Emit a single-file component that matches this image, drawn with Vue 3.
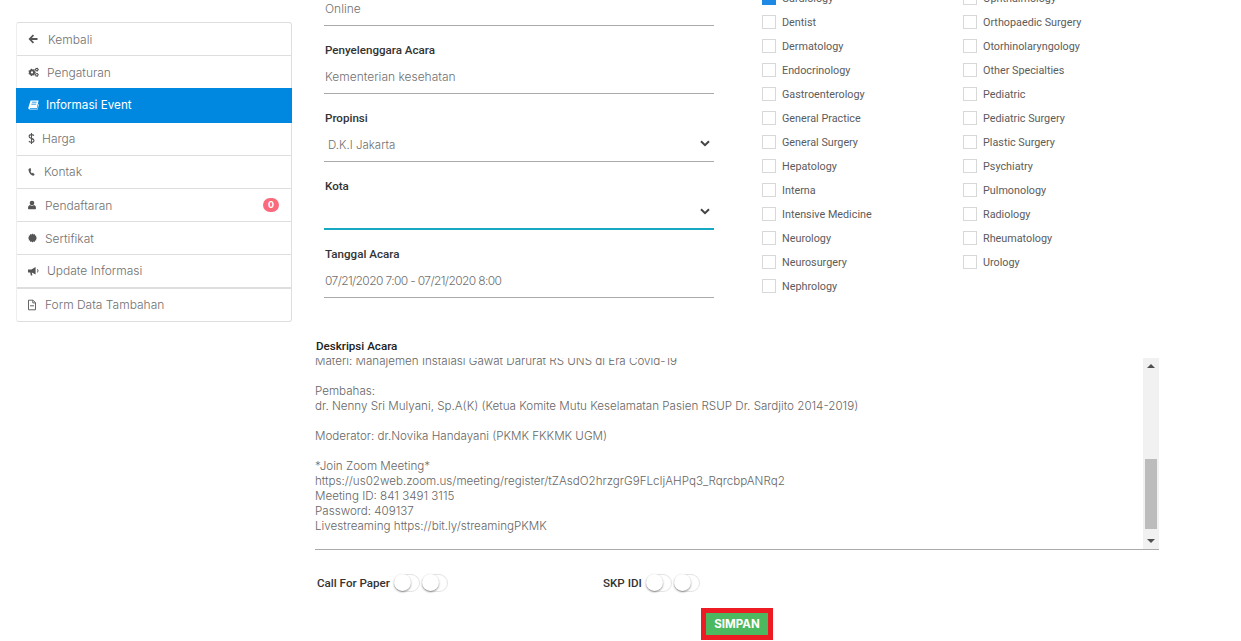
<script setup>
const menu = [
  { label: 'Kembali', icon: 'arrow', gap: 10 },
  { label: 'Pengaturan', icon: 'cogs', gap: 8 },
  { label: 'Informasi Event', icon: 'book', gap: 7, active: true },
  { label: 'Harga', icon: 'dollar', gap: 7 },
  { label: 'Kontak', icon: 'phone', gap: 8 },
  { label: 'Pendaftaran', icon: 'user', gap: 9, badge: 0 },
  { label: 'Sertifikat', icon: 'cert', gap: 8 },
  { label: 'Update Informasi', icon: 'horn', gap: 8, thick: true },
  { label: 'Form Data Tambahan', icon: 'file', gap: 9 },
]

const fields = [
  { label: 'Penyelenggara Acara', value: 'Kementerian kesehatan' },
  { label: 'Propinsi', value: 'D.K.I Jakarta', select: true },
  { label: 'Kota', value: '', select: true, focus: true },
  { label: 'Tanggal Acara', value: '07/21/2020 7:00 - 07/21/2020 8:00', date: true },
]

const specialties = [
  'Cardiology', 'Dentist', 'Dermatology', 'Endocrinology', 'Gastroenterology',
  'General Practice', 'General Surgery', 'Hepatology', 'Interna', 'Intensive Medicine',
  'Neurology', 'Neurosurgery', 'Nephrology', 'Ophthalmology', 'Orthopaedic Surgery',
  'Otorhinolaryngology', 'Other Specialties', 'Pediatric', 'Pediatric Surgery',
  'Plastic Surgery', 'Psychiatry', 'Pulmonology', 'Radiology', 'Rheumatology', 'Urology',
]

const description = `Materi: Manajemen Instalasi Gawat Darurat RS UNS di Era Covid-19

Pembahas:
dr. Nenny Sri Mulyani, Sp.A(K) (Ketua Komite Mutu Keselamatan Pasien RSUP Dr. Sardjito 2014-2019)

Moderator: dr.Novika Handayani (PKMK FKKMK UGM)

*Join Zoom Meeting*
https://us02web.zoom.us/meeting/register/tZAsdO2hrzgrG9FLcIjAHPq3_RqrcbpANRq2
Meeting ID: 841 3491 3115
Password: 409137
Livestreaming https://bit.ly/streamingPKMK`

// spiky circle, used for the gears and the certificate seal
function burst(cx, cy, outer, inner, points) {
  const out = []
  for (let i = 0; i < points * 2; i++) {
    const r = i % 2 ? inner : outer
    const a = (Math.PI * i) / points
    out.push((cx + r * Math.cos(a)).toFixed(2) + ',' + (cy + r * Math.sin(a)).toFixed(2))
  }
  return out.join(' ')
}
</script>

<template>
  <div class="page">
    <aside class="sidebar">
      <a
        v-for="item in menu"
        :key="item.label"
        class="menu-item"
        :class="{ active: item.active, thick: item.thick }"
        :style="{ gap: item.gap + 'px' }"
      >
        <svg v-if="item.icon === 'arrow'" class="ic" width="10" height="12" viewBox="0 0 9 12">
          <path d="M4.3 1.4 5.6 2.7 3.3 5H9V7H3.3L5.6 9.3 4.3 10.6 0 6Z" />
        </svg>
        <svg v-else-if="item.icon === 'cogs'" class="ic" width="11" height="12" viewBox="0 0 11 12">
          <polygon :points="burst(4, 6.4, 3.9, 3, 7)" />
          <circle cx="4" cy="6.4" r="1.1" fill="#fff" />
          <polygon :points="burst(8.8, 3.6, 2.2, 1.6, 6)" />
          <circle cx="8.8" cy="3.6" r=".7" fill="#fff" />
          <polygon :points="burst(8.8, 8.8, 2.2, 1.6, 6)" />
          <circle cx="8.8" cy="8.8" r=".7" fill="#fff" />
        </svg>
        <svg v-else-if="item.icon === 'book'" class="ic" width="11" height="12" viewBox="0 0 11 12">
          <path d="M2.6 1.6H10.6L8.8 9.2H2.2C1.7 9.2 1.6 9.9 2.2 9.9H9.2L10.6 4.8 11 5.2 9.6 10.6H1.9C.8 10.6.1 9.8.4 8.6Z" />
          <path d="M3.8 3.2H8.6M3.4 5.2H8.2" stroke="#0088e0" stroke-width=".8" fill="none" />
        </svg>
        <svg v-else-if="item.icon === 'dollar'" class="ic" width="7" height="13" viewBox="0 0 6 12">
          <path d="M5.2 3.4C4.8 2.7 3.9 2.4 3 2.4 1.8 2.4.8 3 .8 4.1 .8 6.4 5.3 5.4 5.3 7.8 5.3 9 4.2 9.6 3 9.6 2 9.6 1 9.2.6 8.4M3 1V11" fill="none" stroke-width="1" stroke="#555" />
        </svg>
        <svg v-else-if="item.icon === 'phone'" class="ic" width="8" height="12" viewBox="0 0 8 12">
          <path d="M1.9 2.2.6 3C.2 5.8 2.2 8.8 5 9.8L6.2 9.2C6.7 8.9 6.7 8.5 6.4 8.2L5.3 7C5 6.8 4.8 6.8 4.5 7L3.9 7.4C3.2 6.8 2.7 6 2.5 5.1L3 4.6C3.2 4.4 3.2 4.2 3.1 3.9L2.6 2.5C2.5 2.1 2.2 2 1.9 2.2Z" />
        </svg>
        <svg v-else-if="item.icon === 'user'" class="ic" width="8" height="12" viewBox="0 0 8 12">
          <circle cx="4" cy="4" r="2.3" />
          <path d="M0 9.2C0 7.6.8 6.3 1.9 6 2.4 6.5 3.2 6.8 4 6.8 4.8 6.8 5.6 6.5 6.1 6 7.2 6.3 8 7.6 8 9.2 8 9.9 7.5 10.2 7 10.2H1C.5 10.2 0 9.9 0 9.2Z" />
        </svg>
        <svg v-else-if="item.icon === 'cert'" class="ic" width="9" height="12" viewBox="0 0 9 12">
          <polygon :points="burst(4.5, 6, 4.5, 3.6, 12)" />
        </svg>
        <svg v-else-if="item.icon === 'horn'" class="ic" width="11" height="12" viewBox="0 0 11 12">
          <path d="M0 4.4H3.4L7.6 2V9.6L3.8 7.6 4.4 10.4H2.8L2.2 7.6H0Z" />
          <path d="M9 4.2C10.4 4.8 10.4 6.8 9 7.4" fill="none" stroke="#555" stroke-width="1" />
        </svg>
        <svg v-else class="ic" width="8" height="12" viewBox="0 0 8 12">
          <path d="M.5 1.2H5L7.5 3.7V10.8H.5ZM4.8 1.4V3.9H7.3M2 6.8H6" fill="none" stroke="#555" stroke-width=".9" />
        </svg>
        <span class="menu-label">{{ item.label }}</span>
        <span v-if="item.badge !== undefined" class="badge">{{ item.badge }}</span>
      </a>
    </aside>

    <main class="content">
      <div class="top">
        <div class="form-col">
          <div class="input">Online</div>
          <div v-for="f in fields" :key="f.label" class="field">
            <label class="label">{{ f.label }}</label>
            <div class="input" :class="{ focus: f.focus, select: f.select, date: f.date }">
              {{ f.value }}
              <svg v-if="f.select" class="chev" width="10" height="7" viewBox="0 0 10 7">
                <path d="M1 1.2 5 5.2 9 1.2" fill="none" stroke="#444" stroke-width="2" />
              </svg>
            </div>
          </div>
        </div>
        <div class="checks">
          <label v-for="(s, i) in specialties" :key="s" class="check">
            <span class="box" :class="{ on: i === 0 }"></span>
            {{ s }}
          </label>
        </div>
      </div>

      <div class="desc">
        <label class="label desc-label">Deskripsi Acara</label>
        <div class="desc-box">
          <div class="desc-text">{{ description }}</div>
          <div class="scrollbar">
            <span class="arrow up"></span>
            <span class="track"><span class="thumb"></span></span>
            <span class="arrow down"></span>
          </div>
        </div>
      </div>

      <div class="toggles">
        <div class="toggle-group first">
          <span class="toggle-label">Call For Paper</span>
          <span class="switch"></span>
          <span class="switch"></span>
        </div>
        <div class="toggle-group">
          <span class="toggle-label">SKP IDI</span>
          <span class="switch"></span>
          <span class="switch"></span>
        </div>
      </div>

      <div class="actions">
        <button class="save">SIMPAN</button>
      </div>
    </main>
  </div>
</template>

<style scoped>
.page {
  display: flex;
  align-items: flex-start;
  height: 641px;
  overflow: hidden;
  background: #fff;
  font-family: Inter, "Open Sans", sans-serif;
  font-weight: 300;
}

.sidebar {
  width: 276px;
  margin: 22px 0 0 16px;
  flex: none;
  border: 1px solid #dedede;
  border-left-color: #eee;
  border-radius: 3px;
  box-sizing: border-box;
}
.menu-item {
  display: flex;
  align-items: center;
  height: 33.2px;
  box-sizing: border-box;
  padding: 0 12px 0 11px;
  border-bottom: 1px solid #dedede;
  font-size: 12px;
  color: #707070;
}
.menu-item:last-child {
  border-bottom: 0;
  height: 32.4px;
}
.menu-item.thick {
  border-bottom-width: 2px;
}
.menu-item.active {
  background: #0088e0;
  color: #fff;
  font-size: 11.7px;
  font-weight: 400;
  margin: -1px -1px 0 -1px;
  padding-left: 12px;
  height: 34.2px;
  border-bottom-color: #0088e0;
}
.ic {
  flex: none;
  fill: #555;
}
.active .ic {
  fill: #fff;
}
.menu-label {
  flex: 1;
}
.badge {
  width: 16px;
  height: 14px;
  border-radius: 7px;
  background: #f96b7c;
  color: #fff;
  font-size: 9px;
  font-weight: 700;
  line-height: 14px;
  text-align: center;
}

.content {
  width: 844px;
  margin-left: 23px;
  flex: none;
}
.top {
  display: flex;
  height: 312px;
  padding-left: 9px;
}
.form-col {
  width: 390px;
  margin-top: -9px;
  flex: none;
}
.field {
  padding-top: 15px;
}
.label {
  display: block;
  height: 18px;
  line-height: 18px;
  padding-left: 1px;
  font-family: Roboto, sans-serif;
  font-size: 11.6px;
  font-weight: 500;
  color: #333;
}
.input {
  position: relative;
  height: 35px;
  line-height: 36px;
  padding-left: 1px;
  box-sizing: border-box;
  border-bottom: 1px solid #aaa;
  font-size: 12px;
  color: #707070;
}
.input.select {
  padding-left: 4px;
  font-size: 11.5px;
}
.input.date {
  letter-spacing: -0.62px;
}
.input.focus {
  border-bottom: 2px solid #17a8c4;
}
.chev {
  position: absolute;
  right: 4px;
  top: 13px;
}

.checks {
  display: grid;
  grid-template-rows: repeat(13, 24px);
  grid-auto-flow: column;
  grid-template-columns: 201px 201px;
  margin: -14px 0 0 48px;
}
.check {
  display: flex;
  align-items: center;
  gap: 6px;
  font-family: Roboto, sans-serif;
  font-size: 10.8px;
  font-weight: 400;
  color: #5c5c5c;
}
.box {
  width: 14px;
  height: 14px;
  box-sizing: border-box;
  border: 1px solid #d8d8d8;
  flex: none;
}
.box.on {
  background: #1e88e5;
  border-color: #1e88e5;
}

.desc {
  margin-top: 26px;
}
.desc-label {
  height: 17px;
  line-height: 17px;
  margin-left: 1px;
  padding-left: 0;
  color: #222;
}
.desc-box {
  display: flex;
  height: 192px;
  margin-top: 3px;
  border-bottom: 1px solid #aaa;
  box-sizing: border-box;
  overflow: hidden;
}
.desc-text {
  flex: 1;
  margin-top: -4.5px;
  white-space: pre-wrap;
  font-size: 11.62px;
  line-height: 15px;
  color: #666;
}
.scrollbar {
  display: flex;
  flex-direction: column;
  align-items: center;
  width: 16px;
  flex: none;
  background: #f1f1f1;
}
.arrow {
  flex: none;
  width: 0;
  height: 0;
  border-left: 4px solid transparent;
  border-right: 4px solid transparent;
  margin: 6px 0;
}
.arrow.up {
  border-bottom: 4px solid #505050;
}
.arrow.down {
  border-top: 4px solid #505050;
}
.track {
  flex: 1;
  width: 100%;
  display: flex;
  justify-content: center;
  align-items: flex-end;
}
.thumb {
  display: block;
  width: 12px;
  height: 70px;
  margin-bottom: 4px;
  background: #bcbcbc;
}

.toggles {
  display: flex;
  align-items: center;
  margin-top: 24px;
  padding-left: 2px;
}
.toggle-group {
  display: flex;
  align-items: center;
}
.toggle-group.first {
  width: 286px;
}
.toggle-label {
  margin-right: 4px;
  font-family: Roboto, sans-serif;
  font-size: 11.6px;
  font-weight: 500;
  color: #333;
}
.switch {
  position: relative;
  width: 26px;
  height: 18px;
  margin-right: 2px;
  border: 1px solid #e4e4e4;
  border-radius: 9px;
  box-sizing: border-box;
  background: #fff;
}
.switch::before {
  content: "";
  position: absolute;
  left: -1px;
  top: -1px;
  width: 17px;
  height: 17px;
  border-radius: 50%;
  background: #fff;
  box-shadow: 0 1px 2px rgba(0, 0, 0, 0.45);
}

.actions {
  display: flex;
  justify-content: flex-start;
  margin: 16px 0 0 386px;
}
.save {
  width: 72px;
  height: 32px;
  padding: 0;
  border: 5px solid #ed1c24;
  background: #4cb860;
  color: #fff;
  font-family: Inter, sans-serif;
  font-size: 11.5px;
  font-weight: 700;
}
</style>
